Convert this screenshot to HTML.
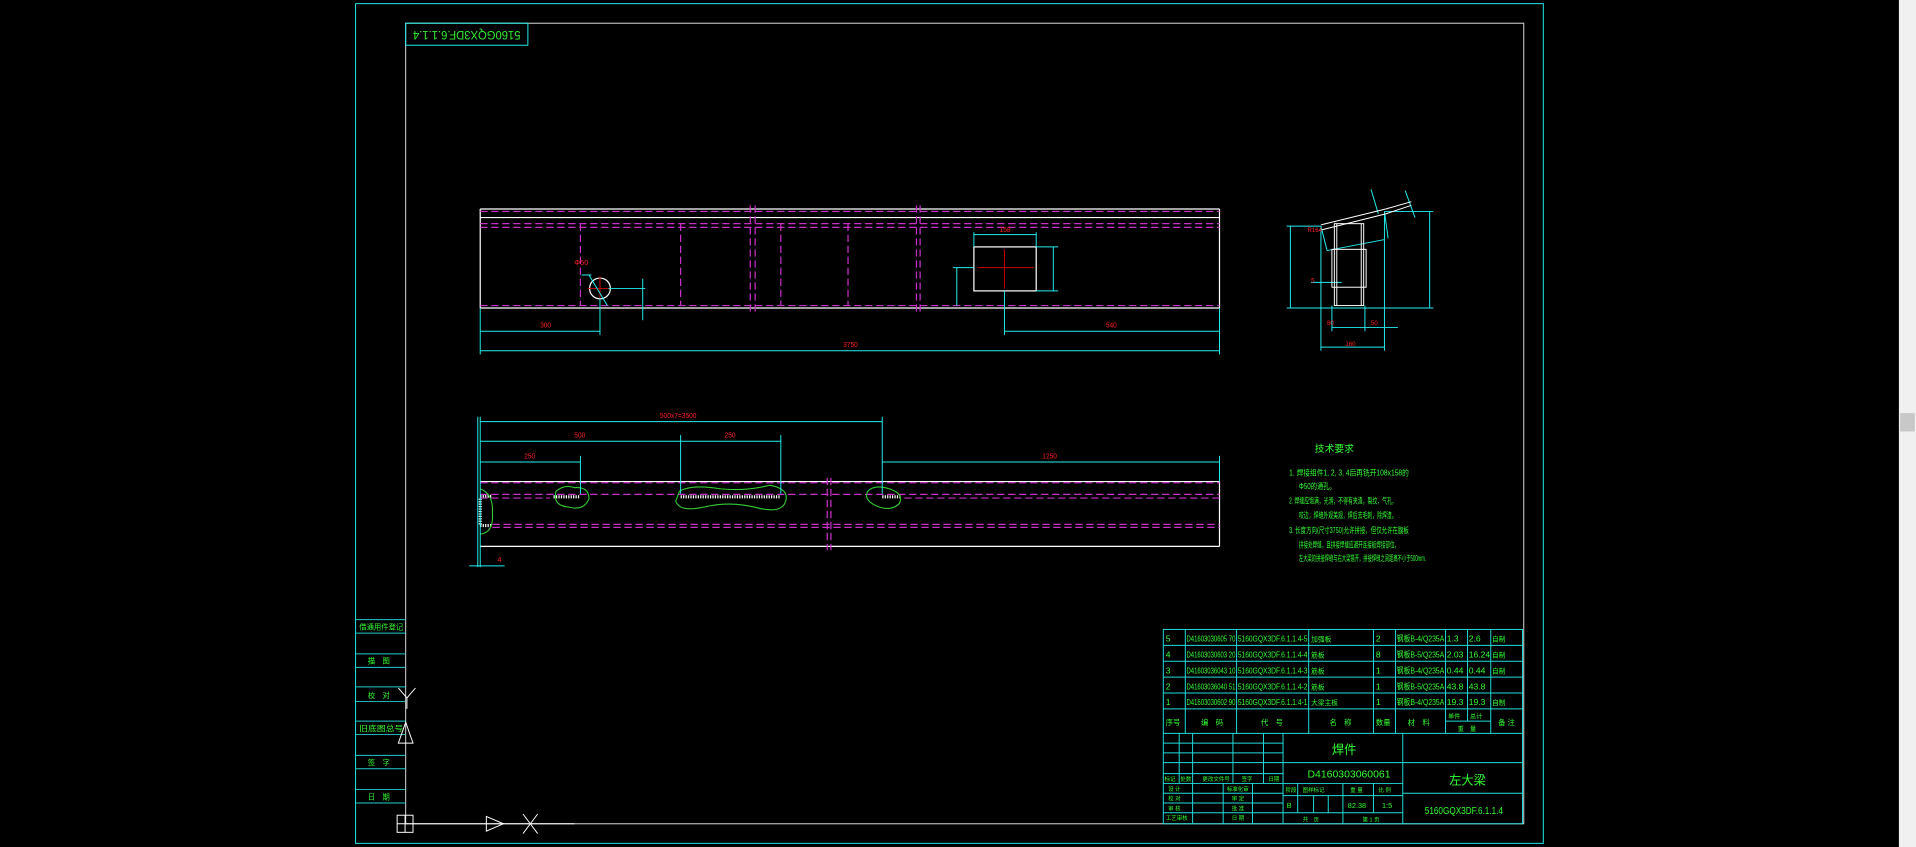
<!DOCTYPE html>
<html><head><meta charset="utf-8"><style>
html,body{margin:0;padding:0;background:#000;width:1916px;height:847px;overflow:hidden}
svg{display:block}
text{font-family:"Liberation Sans","Noto Sans CJK SC",sans-serif}
</style></head><body>
<svg width="1916" height="847" viewBox="0 0 1568 693" preserveAspectRatio="none" xmlns="http://www.w3.org/2000/svg">
<rect width="1568" height="693" fill="#000"/>
<rect x="1554" y="0" width="14" height="693" fill="#f0f0f0"/>
<rect x="1555" y="338" width="12" height="15" fill="#c8c8c8"/>
<g fill="none" stroke-width="0.8">
<rect x="291" y="3" width="972" height="687" stroke="#2ee"/>
<rect x="332" y="19" width="915" height="655" stroke="#ddd"/>
<rect x="332" y="19" width="100" height="18" stroke="#2ee"/>
<g stroke="#2cc">
<line x1="291" y1="507" x2="332" y2="507"/><line x1="291" y1="518" x2="332" y2="518"/>
<line x1="291" y1="535" x2="332" y2="535"/><line x1="291" y1="546" x2="332" y2="546"/>
<line x1="291" y1="562" x2="332" y2="562"/><line x1="291" y1="574" x2="332" y2="574"/>
<line x1="291" y1="590" x2="332" y2="590"/><line x1="291" y1="601" x2="332" y2="601"/>
<line x1="291" y1="618" x2="332" y2="618"/><line x1="291" y1="629" x2="332" y2="629"/>
<line x1="291" y1="646" x2="332" y2="646"/><line x1="291" y1="657" x2="332" y2="657"/>
</g>
<g stroke="#fff">
<rect x="325" y="667" width="13" height="14"/><line x1="331.5" y1="667" x2="331.5" y2="681"/><line x1="325" y1="674" x2="338" y2="674"/>
<line x1="338" y1="674" x2="470" y2="674"/>
<path d="M398 668 L412 674 L398 680 Z"/><path d="M428 666 L440 682 M440 666 L428 682"/>
<path d="M333 571 L326 563 M333 571 L340 563 M333 571 L333 580"/>
<path d="M332 591 L326 608 L338 608 Z"/>
</g>
<g stroke="#fff" stroke-width="1">
<line x1="393" y1="171" x2="998" y2="171"/><line x1="393" y1="178" x2="998" y2="178"/>
<line x1="393" y1="252" x2="998" y2="252"/>
<line x1="393" y1="171" x2="393" y2="252"/><line x1="998" y1="171" x2="998" y2="252"/>
<rect x="797" y="202" width="51" height="36"/>
<ellipse cx="491" cy="236" rx="8.5" ry="8.5"/>
</g>
<g stroke="#c830c8" stroke-dasharray="6,3" stroke-width="1">
<line x1="393" y1="173" x2="998" y2="173"/>
<line x1="393" y1="183" x2="998" y2="183"/><line x1="393" y1="186" x2="998" y2="186"/>
<line x1="393" y1="250" x2="998" y2="250"/>
<line x1="475" y1="183" x2="475" y2="250"/><line x1="557" y1="183" x2="557" y2="250"/>
<line x1="639" y1="183" x2="639" y2="250"/><line x1="694" y1="183" x2="694" y2="250"/>
<line x1="614" y1="168" x2="614" y2="255"/><line x1="618" y1="168" x2="618" y2="255"/>
<line x1="750" y1="168" x2="750" y2="255"/><line x1="753" y1="168" x2="753" y2="255"/>
</g>
<g stroke="#c00"><line x1="481" y1="236" x2="501" y2="236"/><line x1="491" y1="226" x2="491" y2="246"/>
<line x1="800" y1="219" x2="846" y2="219"/><line x1="822" y1="204" x2="822" y2="236"/></g>
<g stroke="#2ee">
<line x1="393" y1="252" x2="393" y2="290"/><line x1="998" y1="252" x2="998" y2="290"/>
<line x1="393" y1="287" x2="998" y2="287"/>
<line x1="393" y1="271" x2="491" y2="271"/><line x1="491" y1="244" x2="491" y2="274"/>
<line x1="822" y1="238" x2="822" y2="274"/><line x1="822" y1="271" x2="998" y2="271"/>
<line x1="797" y1="190" x2="797" y2="202"/><line x1="848" y1="190" x2="848" y2="202"/><line x1="797" y1="192" x2="848" y2="192"/>
<line x1="848" y1="202" x2="866" y2="202"/><line x1="848" y1="238" x2="866" y2="238"/><line x1="862" y1="202" x2="862" y2="238"/>
<line x1="780" y1="219" x2="797" y2="219"/><line x1="783" y1="219" x2="783" y2="250"/>
<line x1="482" y1="225" x2="497" y2="250"/><line x1="476" y1="225" x2="484" y2="225"/>
<line x1="498" y1="236" x2="528" y2="236"/><line x1="526" y1="228" x2="526" y2="262"/>
</g>
<g stroke="#2ee">
<line x1="1053" y1="252" x2="1173" y2="252"/><line x1="1053" y1="185" x2="1081" y2="185"/>
<line x1="1133" y1="173" x2="1173" y2="173"/>
<line x1="1056" y1="185" x2="1056" y2="252"/><line x1="1170" y1="173" x2="1170" y2="252"/>
<line x1="1081" y1="185" x2="1081" y2="287"/><line x1="1133" y1="173" x2="1133" y2="287"/>
<line x1="1081" y1="284" x2="1133" y2="284"/>
<line x1="1090" y1="250" x2="1090" y2="271"/><line x1="1117" y1="250" x2="1117" y2="271"/>
<line x1="1090" y1="268" x2="1144" y2="268"/>
<line x1="1073" y1="231" x2="1098" y2="231"/>
<line x1="1081" y1="185" x2="1086" y2="205"/><line x1="1086" y1="205" x2="1133" y2="196"/>
<line x1="1133" y1="173" x2="1136" y2="195"/>
<line x1="1150" y1="156" x2="1158" y2="178"/><line x1="1122" y1="155" x2="1128" y2="175"/>
</g>
<g stroke="#fff">
<path d="M1081 184 L1134 171 L1155 165"/><path d="M1082 188 L1134 175 L1155 168"/>
<rect x="1092" y="183" width="24" height="67"/>
<line x1="1094" y1="183" x2="1094" y2="250"/><line x1="1114" y1="183" x2="1114" y2="250"/>
<rect x="1090" y="204" width="28" height="31"/>
</g>
<g stroke="#fff" stroke-width="1">
<line x1="393" y1="394" x2="998" y2="394"/><line x1="393" y1="447" x2="998" y2="447"/>
<line x1="998" y1="394" x2="998" y2="447"/>
</g>
<g stroke="#fff" stroke-width="2.5" stroke-dasharray="1,1">
<line x1="453" y1="406.5" x2="475" y2="406.5"/><line x1="557" y1="406.5" x2="639" y2="406.5"/>
<line x1="722" y1="406.5" x2="738" y2="406.5"/><line x1="393" y1="406" x2="403" y2="406"/><line x1="393" y1="430" x2="403" y2="430"/>
<line x1="393" y1="408" x2="393" y2="430"/>
</g>
<g stroke="#c830c8" stroke-dasharray="6,3" stroke-width="1">
<line x1="393" y1="395" x2="998" y2="395"/>
<line x1="393" y1="404.5" x2="998" y2="404.5"/><line x1="740" y1="407.5" x2="998" y2="407.5"/>
<line x1="393" y1="407.5" x2="450" y2="407.5"/>
<line x1="403" y1="429" x2="998" y2="429"/><line x1="403" y1="431.5" x2="998" y2="431.5"/>
<line x1="677" y1="391" x2="677" y2="450"/><line x1="680" y1="391" x2="680" y2="450"/>
</g>
<g stroke="#3c3" stroke-width="0.9">
<path d="M455 402 Q462 396 470 399 Q482 398 482 408 Q478 418 466 415 Q452 414 455 402 Z"/>
<path d="M556 402 Q566 396 590 400 Q610 402 630 397 Q646 400 643 410 Q640 420 622 416 Q600 410 580 414 Q556 420 553 410 Z"/>
<path d="M710 402 Q716 396 728 400 Q740 404 736 412 Q730 418 720 415 Q706 410 710 402 Z"/>
<path d="M393 400 Q404 404 403 420 Q404 436 393 437"/>
</g>
<g stroke="#2ee">
<line x1="391" y1="341" x2="391" y2="464"/><line x1="393" y1="341" x2="393" y2="464"/>
<line x1="393" y1="345" x2="722" y2="345"/><line x1="722" y1="341" x2="722" y2="404"/>
<line x1="393" y1="361" x2="639" y2="361"/><line x1="557" y1="356" x2="557" y2="404"/><line x1="639" y1="356" x2="639" y2="404"/>
<line x1="393" y1="378" x2="475" y2="378"/><line x1="475" y1="373" x2="475" y2="404"/>
<line x1="722" y1="378" x2="998" y2="378"/><line x1="998" y1="373" x2="998" y2="394"/>
<line x1="384" y1="463" x2="413" y2="463"/>
</g>
<g stroke="#2dd">
<rect x="952" y="515" width="294" height="159"/>
<line x1="952" y1="528" x2="1246" y2="528"/><line x1="952" y1="541" x2="1246" y2="541"/>
<line x1="952" y1="554" x2="1246" y2="554"/><line x1="952" y1="567" x2="1246" y2="567"/>
<line x1="952" y1="580" x2="1246" y2="580"/><line x1="952" y1="600" x2="1246" y2="600"/>
<line x1="1183" y1="590" x2="1220" y2="590"/>
<line x1="970" y1="515" x2="970" y2="600"/><line x1="1012" y1="515" x2="1012" y2="600"/>
<line x1="1071" y1="515" x2="1071" y2="600"/><line x1="1124" y1="515" x2="1124" y2="600"/>
<line x1="1142" y1="515" x2="1142" y2="600"/><line x1="1183" y1="515" x2="1183" y2="600"/>
<line x1="1201" y1="515" x2="1201" y2="590"/><line x1="1220" y1="515" x2="1220" y2="600"/>
<line x1="952" y1="608" x2="1050" y2="608"/><line x1="952" y1="616" x2="1050" y2="616"/>
<line x1="952" y1="624" x2="1050" y2="624"/><line x1="952" y1="633" x2="1050" y2="633"/>
<line x1="952" y1="641" x2="1050" y2="641"/><line x1="952" y1="649" x2="1050" y2="649"/>
<line x1="952" y1="657" x2="1050" y2="657"/><line x1="952" y1="665" x2="1050" y2="665"/>
<line x1="965" y1="600" x2="965" y2="641"/><line x1="976" y1="600" x2="976" y2="674"/>
<line x1="1009" y1="600" x2="1009" y2="641"/><line x1="1034" y1="600" x2="1034" y2="641"/>
<line x1="1001" y1="641" x2="1001" y2="674"/><line x1="1025" y1="641" x2="1025" y2="674"/>
<line x1="1050" y1="600" x2="1050" y2="674"/><line x1="1148" y1="600" x2="1148" y2="674"/>
<line x1="1050" y1="624" x2="1148" y2="624"/>
<line x1="1148" y1="624" x2="1246" y2="624"/><line x1="1148" y1="649" x2="1246" y2="649"/>
<line x1="1050" y1="641" x2="1148" y2="641"/><line x1="1050" y1="651" x2="1148" y2="651"/><line x1="1050" y1="665" x2="1148" y2="665"/>
<line x1="1062" y1="641" x2="1062" y2="665"/><line x1="1075" y1="651" x2="1075" y2="665"/>
<line x1="1087" y1="651" x2="1087" y2="665"/><line x1="1099" y1="641" x2="1099" y2="674"/>
<line x1="1124" y1="641" x2="1124" y2="665"/>
</g>
</g>
<g fill="#f22" font-size="6">
<text x="442" y="268" textLength="9" lengthAdjust="spacingAndGlyphs">300</text>
<text x="690" y="284" textLength="12" lengthAdjust="spacingAndGlyphs">3750</text>
<text x="905" y="268" textLength="9" lengthAdjust="spacingAndGlyphs">540</text>
<text x="818" y="190" textLength="9" lengthAdjust="spacingAndGlyphs">158</text>
<text x="470" y="217">Φ50</text>
<text x="1070" y="190" font-size="5">R164</text>
<text x="1086" y="266" font-size="5">80</text><text x="1122" y="266" font-size="5">50</text>
<text x="1101" y="283" font-size="5">160</text><text x="1073" y="231" font-size="5">5</text>
<text x="540" y="342" textLength="30" lengthAdjust="spacingAndGlyphs">500x7=3500</text>
<text x="470" y="358" textLength="9" lengthAdjust="spacingAndGlyphs">500</text>
<text x="593" y="358" textLength="9" lengthAdjust="spacingAndGlyphs">250</text>
<text x="429" y="375" textLength="9" lengthAdjust="spacingAndGlyphs">250</text>
<text x="853" y="375" textLength="12" lengthAdjust="spacingAndGlyphs">1250</text>
<text x="407" y="460">4</text>
</g>
<g fill="#3f3" font-size="7">
<text transform="translate(382,28) rotate(180)" text-anchor="middle" dominant-baseline="middle" fill="#3e3" font-size="10" textLength="88" lengthAdjust="spacingAndGlyphs">5160GQX3DF.6.1.1.4</text>
<text x="1076" y="370" font-size="8">技术要求</text>
<g font-size="6.5">
<text x="1055" y="389" textLength="98" lengthAdjust="spacingAndGlyphs">1. 焊接组件1, 2, 3, 4后再铣开108x158的</text>
<text x="1063" y="400" textLength="30" lengthAdjust="spacingAndGlyphs">Φ50的通孔。</text>
<text x="1055" y="412" textLength="88" lengthAdjust="spacingAndGlyphs">2. 焊缝应饱满，光滑，不得有夹渣，裂纹，气孔，</text>
<text x="1063" y="424" textLength="80" lengthAdjust="spacingAndGlyphs">咬边，焊缝外观美观，焊后去毛刺，除焊渣。</text>
<text x="1055" y="436" textLength="98" lengthAdjust="spacingAndGlyphs">3. 长度方向(尺寸3750)允许拼接，但仅允许在腹板</text>
<text x="1063" y="448" textLength="82" lengthAdjust="spacingAndGlyphs">拼接处焊缝，且拼接焊缝应避开连接板焊接部位，</text>
<text x="1063" y="459" textLength="104" lengthAdjust="spacingAndGlyphs">左大梁的拼接焊缝与右大梁错开，拼接焊缝之间距离不小于500mm.</text>
</g>
<g font-size="6">
<text x="294" y="515" textLength="36" lengthAdjust="spacingAndGlyphs">借通用件登记</text>
<text x="301" y="543">描　图</text><text x="301" y="571">校　对</text>
<text x="294" y="598" textLength="36" lengthAdjust="spacingAndGlyphs">旧底图总号</text>
<text x="301" y="626">签　字</text><text x="301" y="654">日　期</text>
</g>
<g font-size="7">
<text x="954" y="525">5</text><text x="954" y="538">4</text><text x="954" y="551">3</text><text x="954" y="564">2</text><text x="954" y="577">1</text>
<text x="971" y="525" textLength="40" lengthAdjust="spacingAndGlyphs">D41603030605 70</text>
<text x="971" y="538" textLength="40" lengthAdjust="spacingAndGlyphs">D41603030603 20</text>
<text x="971" y="551" textLength="40" lengthAdjust="spacingAndGlyphs">D41603036043 10</text>
<text x="971" y="564" textLength="40" lengthAdjust="spacingAndGlyphs">D41603036040 51</text>
<text x="971" y="577" textLength="40" lengthAdjust="spacingAndGlyphs">D41603030602 90</text>
<text x="1013" y="525" textLength="57" lengthAdjust="spacingAndGlyphs">5160GQX3DF.6.1.1.4-5</text>
<text x="1013" y="538" textLength="57" lengthAdjust="spacingAndGlyphs">5160GQX3DF.6.1.1.4-4</text>
<text x="1013" y="551" textLength="57" lengthAdjust="spacingAndGlyphs">5160GQX3DF.6.1.1.4-3</text>
<text x="1013" y="564" textLength="57" lengthAdjust="spacingAndGlyphs">5160GQX3DF.6.1.1.4-2</text>
<text x="1013" y="577" textLength="57" lengthAdjust="spacingAndGlyphs">5160GQX3DF.6.1.1.4-1</text>
<text x="1073" y="525" font-size="5.5">加强板</text><text x="1073" y="538" font-size="5.5">筋板</text>
<text x="1073" y="551" font-size="5.5">筋板</text><text x="1073" y="564" font-size="5.5">筋板</text><text x="1073" y="577" font-size="5.5">大梁主板</text>
<text x="1126" y="525">2</text><text x="1126" y="538">8</text><text x="1126" y="551">1</text><text x="1126" y="564">1</text><text x="1126" y="577">1</text>
<text x="1143" y="525" textLength="39" lengthAdjust="spacingAndGlyphs">钢板B-4/Q235A</text>
<text x="1143" y="538" textLength="39" lengthAdjust="spacingAndGlyphs">钢板B-5/Q235A</text>
<text x="1143" y="551" textLength="39" lengthAdjust="spacingAndGlyphs">钢板B-4/Q235A</text>
<text x="1143" y="564" textLength="39" lengthAdjust="spacingAndGlyphs">钢板B-5/Q235A</text>
<text x="1143" y="577" textLength="39" lengthAdjust="spacingAndGlyphs">钢板B-4/Q235A</text>
<text x="1184" y="525">1.3</text><text x="1202" y="525">2.6</text><text x="1221" y="525" font-size="5.5">自制</text>
<text x="1184" y="538">2.03</text><text x="1202" y="538">16.24</text><text x="1221" y="538" font-size="5.5">自制</text>
<text x="1184" y="551">0.44</text><text x="1202" y="551">0.44</text><text x="1221" y="551" font-size="5.5">自制</text>
<text x="1184" y="564">43.8</text><text x="1202" y="564">43.8</text>
<text x="1184" y="577">19.3</text><text x="1202" y="577">19.3</text><text x="1221" y="577" font-size="5.5">自制</text>
</g>
<g font-size="6">
<text x="954" y="593">序号</text><text x="983" y="593">编　码</text><text x="1032" y="593">代　号</text>
<text x="1088" y="593">名　称</text><text x="1126" y="593">数量</text><text x="1152" y="593">材　料</text>
<text x="1185" y="588" font-size="5">单件</text><text x="1203" y="588" font-size="5">总计</text><text x="1193" y="598" font-size="5">重　量</text>
<text x="1226" y="593">备 注</text>
<text x="953" y="639" font-size="4.5">标记</text><text x="966" y="639" font-size="4.5">处数</text><text x="984" y="639" font-size="4.5">更改文件号</text>
<text x="1016" y="639" font-size="4.5">签字</text><text x="1038" y="639" font-size="4.5">日期</text>
<text x="956" y="647" font-size="4.5">设 计</text><text x="956" y="655" font-size="4.5">校 对</text>
<text x="956" y="663" font-size="4.5">审 核</text><text x="954" y="671" font-size="4.5">工艺审核</text>
<text x="1004" y="647" font-size="4.5">标准化审</text><text x="1008" y="655" font-size="4.5">审 定</text>
<text x="1008" y="663" font-size="4.5">批 准</text><text x="1008" y="671" font-size="4.5">日 期</text>
<text x="1052" y="648" font-size="4.5">阶段</text><text x="1066" y="648" font-size="4.5">图样标记</text>
<text x="1105" y="648" font-size="4.5">重 量</text><text x="1128" y="648" font-size="4.5">比 例</text>
<text x="1053" y="661">B</text><text x="1103" y="661">82.38</text><text x="1131" y="661">1:5</text>
<text x="1066" y="672" font-size="4.5">共　页</text><text x="1115" y="672" font-size="4.5">第 1 页</text>
</g>
<text x="1090" y="617" font-size="10">焊件</text>
<text x="1070" y="636" font-size="8" textLength="68" lengthAdjust="spacingAndGlyphs">D4160303060061</text>
<text x="1186" y="642" font-size="10">左大梁</text>
<text x="1166" y="666" font-size="8" textLength="64" lengthAdjust="spacingAndGlyphs">5160GQX3DF.6.1.1.4</text>
</g>
</svg>
</body></html>
